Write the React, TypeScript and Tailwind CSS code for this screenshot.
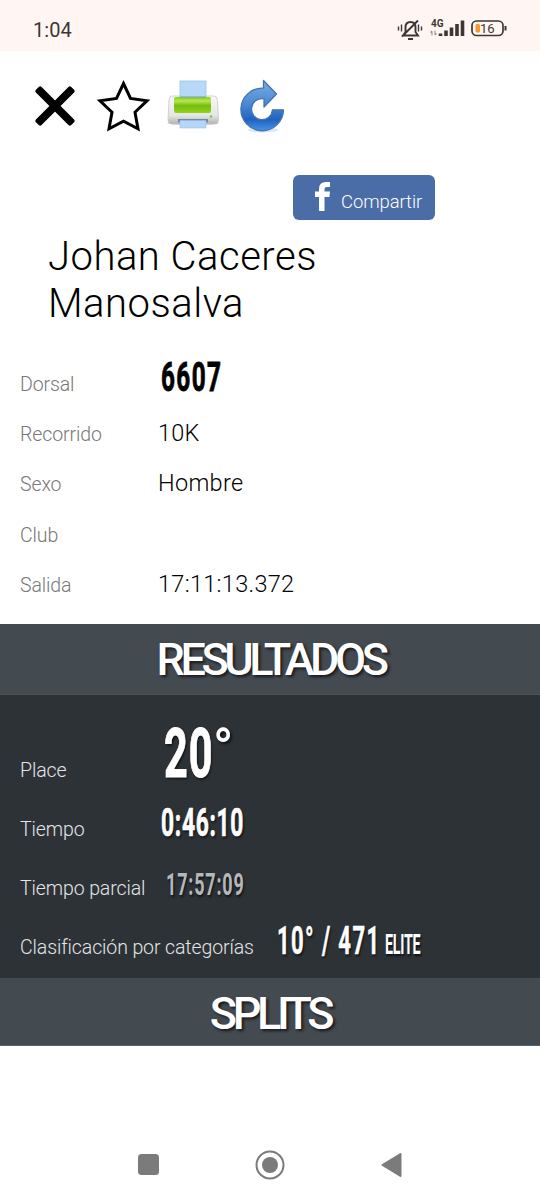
import React from 'react';

const shadow = '[text-shadow:2px_2px_3px_rgba(0,0,0,0.65)]';

function Row({ label, height, dark, children }: { label: string; height: string; dark?: boolean; children?: React.ReactNode }) {
  return (
    <div className={`flex items-baseline pl-5 whitespace-nowrap ${height}`}>
      <span className={`shrink-0 text-[19.5px] font-light tracking-[-0.11px] ${dark ? 'text-[#e3e5e7]' : 'w-[138px] text-[#777]'}`}>{label}</span>
      {children}
    </div>
  );
}

function Printer() {
  return (
    <svg width="54" height="50" viewBox="0 0 54 50">
      <defs>
        <linearGradient id="green" x1="0" y1="0" x2="0" y2="1">
          <stop offset="0" stopColor="#8cd01c" /><stop offset=".25" stopColor="#b4e94c" /><stop offset=".55" stopColor="#76bb10" /><stop offset="1" stopColor="#91d41d" />
        </linearGradient>
        <linearGradient id="body" x1="0" y1="0" x2="0" y2="1">
          <stop offset="0" stopColor="#f8f8f8" /><stop offset=".7" stopColor="#e5e5e5" /><stop offset="1" stopColor="#b2b2b2" />
        </linearGradient>
      </defs>
      <ellipse cx="27" cy="43.5" rx="26" ry="1.6" fill="#c9c9c9" opacity=".7" />
      <path d="M6 16h42q3 0 3.500 4l1 20q0 4-4 4H6q-4 0-4-4l1-20q.5-4 3-4z" fill="url(#body)" stroke="#c8c8c8" strokeWidth=".8" />
      <rect x="14" y="1" width="26" height="19" fill="#b7d9f7" stroke="#9ac3e9" strokeWidth=".8" />
      <rect x="8" y="17" width="37" height="16" rx="2" fill="url(#green)" />
      <path d="M14 16h26v2.500H14z" fill="#7fae9a" opacity=".6" />
      <rect x="12" y="39" width="30" height="3.500" fill="#6d89a8" />
      <path d="M14 40.500h26v7.500H14z" fill="#b4d6f8" stroke="#9ac3e9" strokeWidth=".6" />
      <circle cx="45" cy="36.500" r="1.200" fill="#7cc41f" />
    </svg>
  );
}

function Refresh() {
  return (
    <svg width="50" height="56" viewBox="0 0 50 56">
      <defs>
        <linearGradient id="blue" x1="0" y1="0" x2="0" y2="1">
          <stop offset="0" stopColor="#7aaee2" /><stop offset=".5" stopColor="#4686d2" /><stop offset=".78" stopColor="#2162c0" /><stop offset="1" stopColor="#4696e6" />
        </linearGradient>
      </defs>
      <ellipse cx="25" cy="52" rx="15" ry="2.500" fill="#9bb7dc" opacity=".35" />
      <path d="M25.500 2.500 38.500 16 26 29v-8.200A10.500 10.500 0 1 0 34.500 31.800H45.500A21.300 21.300 0 1 1 25.500 10.200z" fill="url(#blue)" stroke="#4474ae" strokeWidth="1.300" strokeLinejoin="round" />
    </svg>
  );
}

export default function App() {
  return (
    <div className="flex h-[1200px] w-[540px] flex-col overflow-hidden bg-white font-['Roboto',sans-serif] text-black">
      <header className="flex h-[51px] shrink-0 items-center justify-between bg-[#fff5f2] pr-[31px] pl-[33px] pt-2 text-[#3d3734]">
        <span className="text-[20px] leading-[42px] tracking-[0.1px]">1:04</span>
        <svg className="mt-[3px]" width="112" height="28" viewBox="0 0 112 28" fill="none" stroke="#3d3734">
          <path d="M6 18.500h15l-2.500-3.500V10.500q0-5.500-5-5.500-5 0-5 5.500V15zM11 22h5M21 3.500 5 19.500" strokeWidth="1.900" />
          <path d="M1.500 9.500v4M4.500 7.500v7M21.500 7.500v7M24.500 9.500v4" strokeWidth="1.400" />
          <text x="34" y="9.500" fontSize="10" fontWeight="700" fill="#3d3734" stroke="none">4G</text>
          <path d="M35 18.500v-4M33.500 15.500l1.500-1.500M38 13.500v4M39.500 16.500l-1.500 1.500" stroke="#9b9491" strokeWidth="1.100" />
          <path d="M43.500 19v-2.500M49 19v-5.500M54.500 19v-8.500M60 19V7M65.500 19V3.500" strokeWidth="3.600" />
          <rect x="75" y="4" width="31" height="14.500" rx="4.500" strokeWidth="1.700" />
          <path d="M108.500 9v4.500" strokeWidth="2" />
          <rect x="78.500" y="7" width="4.500" height="8.500" rx="1.500" fill="#f29b2e" stroke="none" />
          <text x="83" y="16" fontSize="13" fill="#3d3734" stroke="none">16</text>
        </svg>
      </header>

      <nav className="flex h-[124px] shrink-0 items-start pt-[28px] pl-[34px]">
        <svg className="mt-[6px]" width="42" height="42" viewBox="0 0 42 42">
          <g transform="rotate(45 21 21)"><rect x="-4" y="17" width="50" height="8" rx="2" /><rect x="17" y="-4" width="8" height="50" rx="2" /></g>
        </svg>
        <svg className="ml-[20px]" width="55" height="54" viewBox="0 0 55 54"><path d="M27.500 4.500 34.500 19.500 51 21.800 39 33.200 42 49.800 27.500 42.200 13 49.800 16 33.200 4 21.800 20.500 19.500z" fill="none" stroke="#000" strokeWidth="3" /></svg>
        <div className="mt-px ml-[15px]"><Printer /></div>
        <div className="-mt-[1px] ml-[18px]"><Refresh /></div>
      </nav>

      <button className="ml-[293px] flex h-[45px] w-[142px] shrink-0 items-baseline rounded-[6px] bg-[#4a6da8] pl-[21px] text-white">
        <svg width="17" height="29" viewBox="0 0 17 29" className="relative top-[3px]"><path d="M5 29V15H1V9.500h4V7q0-7 7-7h4v5h-3q-2.500 0-2.500 2v2.500H16l-.6 5.500h-4.900v14z" fill="currentColor" /></svg>
        <span className="ml-[10px] text-[18.5px] leading-[54px] font-light tracking-[-0.1px]">Compartir</span>
      </button>

      <h1 className="ml-[48px] mt-[13px] h-[126px] shrink-0 text-[40px] leading-[47px] font-light tracking-[0.5px]">Johan Caceres<br />Manosalva</h1>

      <section className="h-[265px] shrink-0 pt-px">
        <Row label="Dorsal" height="h-[50px] leading-[50px]">
          <span className="ml-[3px] inline-block origin-left scale-x-[0.6] text-[40.5px] leading-[0] font-bold tracking-[2.3px] [-webkit-text-stroke:0.9px_currentColor]">6607</span>
        </Row>
        <Row label="Recorrido" height="h-[50px] leading-[50px]"><span className="text-[23.500px] leading-[0] font-light tracking-[0.25px]">10K</span></Row>
        <Row label="Sexo" height="h-[50px] leading-[50px]"><span className="text-[23.500px] leading-[0] font-light tracking-[0.3px]">Hombre</span></Row>
        <Row label="Club" height="h-[50px] leading-[51px]" />
        <Row label="Salida" height="h-[50px] leading-[52px]"><span className="text-[23.500px] leading-[0] font-light tracking-[0.3px]">17:11:13.372</span></Row>
      </section>

      <h2 className={`h-[71px] shrink-0 border-b border-[#4a5157] bg-[#434a50] pl-[1px] text-center text-[45px] leading-[72px] font-medium tracking-[-4.4px] text-white ${shadow}`}>RESULTADOS</h2>
      <section className="h-[283px] shrink-0 bg-[#2d3236] pt-[46px] text-white">
        <Row dark label="Place" height="h-[59px] leading-[59px]">
          <span className={`ml-[98px] flex items-baseline text-[69px] leading-[0] font-bold ${shadow}`}>
            <span className="inline-block w-[49px] origin-left scale-x-[0.6] tracking-[1.5px] [-webkit-text-stroke:1px_currentColor]">20</span>
            <span className="relative -top-[9px] inline-block origin-left scale-x-[0.95] text-[56px] font-medium">°</span>
          </span>
        </Row>
        <Row dark label="Tiempo" height="h-[59px] leading-[59px]">
          <span className={`ml-[76px] inline-block origin-left scale-x-[0.6] text-[38px] leading-[0] font-bold tracking-[1.15px] [-webkit-text-stroke:0.7px_currentColor] ${shadow}`}>0:46:10</span>
        </Row>
        <Row dark label="Tiempo parcial" height="h-[59px] leading-[59px]">
          <span className={`ml-[21px] inline-block origin-left scale-x-[0.58] text-[31px] leading-[0] font-bold tracking-[1.4px] text-[#b5b8ba] ${shadow}`}>17:57:09</span>
        </Row>
        <Row dark label="Clasificación por categorías" height="h-[59px] leading-[59px]">
          <span className={`ml-[23px] inline-block w-[108px] origin-left scale-x-[0.58] text-[38px] leading-[0] font-bold tracking-[2.4px] [-webkit-text-stroke:0.5px_currentColor] ${shadow}`}>10° / 471</span>
          <span className={`inline-block origin-left scale-x-[0.53] text-[27px] leading-[0] font-bold tracking-[-0.5px] ${shadow}`}>ELITE</span>
        </Row>
      </section>
      <h2 className={`h-[68px] shrink-0 border-b border-[#596065] bg-[#434a50] text-center text-[45px] leading-[72px] font-medium tracking-[-4.4px] text-white ${shadow}`}>SPLITS</h2>

      <footer className="mt-auto flex h-[71px] shrink-0 items-center justify-between pr-[138px] pl-[138px]">
        <svg width="21" height="21"><rect width="21" height="21" rx="3.500" fill="#7b7b7b" /></svg>
        <svg width="30" height="30"><circle cx="15" cy="15" r="13.500" fill="none" stroke="#7b7b7b" strokeWidth="2" /><circle cx="15" cy="15" r="8" fill="#7b7b7b" /></svg>
        <svg width="21" height="26"><path d="M19.500 2v22L1.500 13z" fill="#7b7b7b" stroke="#7b7b7b" strokeWidth="2" strokeLinejoin="round" /></svg>
      </footer>
    </div>
  );
}
